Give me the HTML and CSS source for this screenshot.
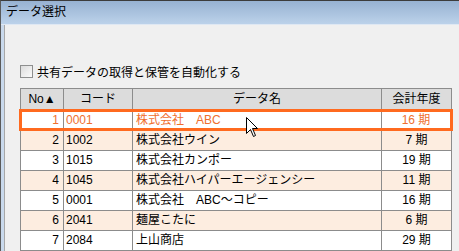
FILE: index.html
```html
<!DOCTYPE html>
<html lang="ja">
<head>
  <meta charset="UTF-8" />
  <title>データ選択</title>
  <link rel="stylesheet" href="styles.css">
</head>
<body>

<div class="window">
  <div class="titlebar">データ選択</div>

  <div class="frame">
    <div class="content">
      <label class="auto">
        <span class="check"></span>
        共有データの取得と保管を自動化する
      </label>

      <div class="grid-wrap">
        <table class="grid">
          <colgroup>
            <col class="c-no">
            <col class="c-code">
            <col class="c-name">
            <col class="c-year">
          </colgroup>
          <thead>
            <tr>
              <th>No▲</th>
              <th>コード</th>
              <th>データ名</th>
              <th>会計年度</th>
            </tr>
          </thead>
          <tbody>
            <tr class="selected">
              <td class="no">1</td><td class="code">0001</td><td class="name">株式会社　ABC</td><td class="year">16 期</td>
            </tr>
            <tr class="alt">
              <td class="no">2</td><td class="code">1002</td><td class="name">株式会社ウイン</td><td class="year">7 期</td>
            </tr>
            <tr>
              <td class="no">3</td><td class="code">1015</td><td class="name">株式会社カンポー</td><td class="year">19 期</td>
            </tr>
            <tr class="alt">
              <td class="no">4</td><td class="code">1045</td><td class="name">株式会社ハイパーエージェンシー</td><td class="year">11 期</td>
            </tr>
            <tr>
              <td class="no">5</td><td class="code">0001</td><td class="name">株式会社　ABC～コピー</td><td class="year">16 期</td>
            </tr>
            <tr class="alt">
              <td class="no">6</td><td class="code">2041</td><td class="name">麺屋こたに</td><td class="year">6 期</td>
            </tr>
            <tr>
              <td class="no">7</td><td class="code">2084</td><td class="name">上山商店</td><td class="year">29 期</td>
            </tr>
          </tbody>
        </table>

        <!-- mouse pointer over the selected row -->
        <svg class="cursor" width="13" height="21" viewBox="0 0 13 21">
          <path d="M0.5 0.5 L0.5 16.5 L4.5 12.5 L7.5 19.5 L9.5 18.5 L6.5 11.5 L11.5 11.5 Z" fill="#fff" stroke="#000" stroke-width="1"/>
        </svg>
      </div>
    </div>
  </div>
</div>

</body>
</html>
```

FILE: styles.css
```css
html, body {
  margin: 0;
  width: 459px;
  height: 251px;
  overflow: hidden;
}

body {
  font-family: "Liberation Sans", "Noto Sans CJK JP", sans-serif;
  font-size: 12px;
  color: #000;
  background: #f0f0f0;
}

.window {
  display: flex;
  flex-direction: column;
  height: 251px;
  border-top: 1px solid #3c3c3c;
  border-left: 1px solid #5a5a5a;
  box-sizing: border-box;
}

.titlebar {
  height: 24px;
  line-height: 22px;
  padding-left: 5px;
  font-size: 12px;
  background: linear-gradient(to bottom, #97b2d2, #bcd2ea);
  border-bottom: 1px solid #dfe8f3;
}

.frame {
  flex: 1;
  display: flex;
  background: #c9d9ec;
  padding-left: 3px;
}

.content {
  flex: 1;
  background: #f0f0f0;
  border-left: 1px solid #a7a7a7;
  padding: 40px 0 0 14px;
}

.auto {
  display: flex;
  align-items: center;
  gap: 4px;
  height: 13px;
  margin-left: 1px;
}

.check {
  width: 11px;
  height: 11px;
  border: 1px solid #8e8f8f;
  background: linear-gradient(135deg, #dcdcdc, #fbfbfb);
}

.grid-wrap {
  position: relative;
  margin-top: 10px;
}

.grid {
  border-collapse: collapse;
  table-layout: fixed;
  width: 431px;
}

.c-no { width: 43px; }
.c-code { width: 69px; }
.c-name { width: 249px; }
.c-year { width: 70px; }

.grid th,
.grid td {
  height: 19px;
  padding: 0;
  border: 1px solid #8c8c8c;
  white-space: nowrap;
  overflow: hidden;
  line-height: 19px;
}

.grid th {
  height: 20px;
  line-height: 20px;
  background: #dcdcdc;
  font-weight: normal;
  text-align: center;
}

.grid td.no {
  text-align: right;
  padding-right: 4px;
}

.grid td.code {
  padding-left: 2px;
}

.grid td.name {
  padding-left: 3px;
}

.grid td.year {
  text-align: center;
}

.grid tr td {
  background: #fff;
}

.grid tr.alt td {
  background: #fdede0;
}

.grid tr.selected td {
  color: #ef6f2e;
  border-top: 3px solid #ff6a1f;
  border-bottom: 3px solid #ff6a1f;
  height: 16px;
  line-height: 16px;
}

.grid tr.selected td.no {
  border-left: 3px solid #ff6a1f;
}

.grid tr.selected td.year {
  border-right: 3px solid #ff6a1f;
}

.cursor {
  position: absolute;
  left: 227px;
  top: 29px;
}
```
